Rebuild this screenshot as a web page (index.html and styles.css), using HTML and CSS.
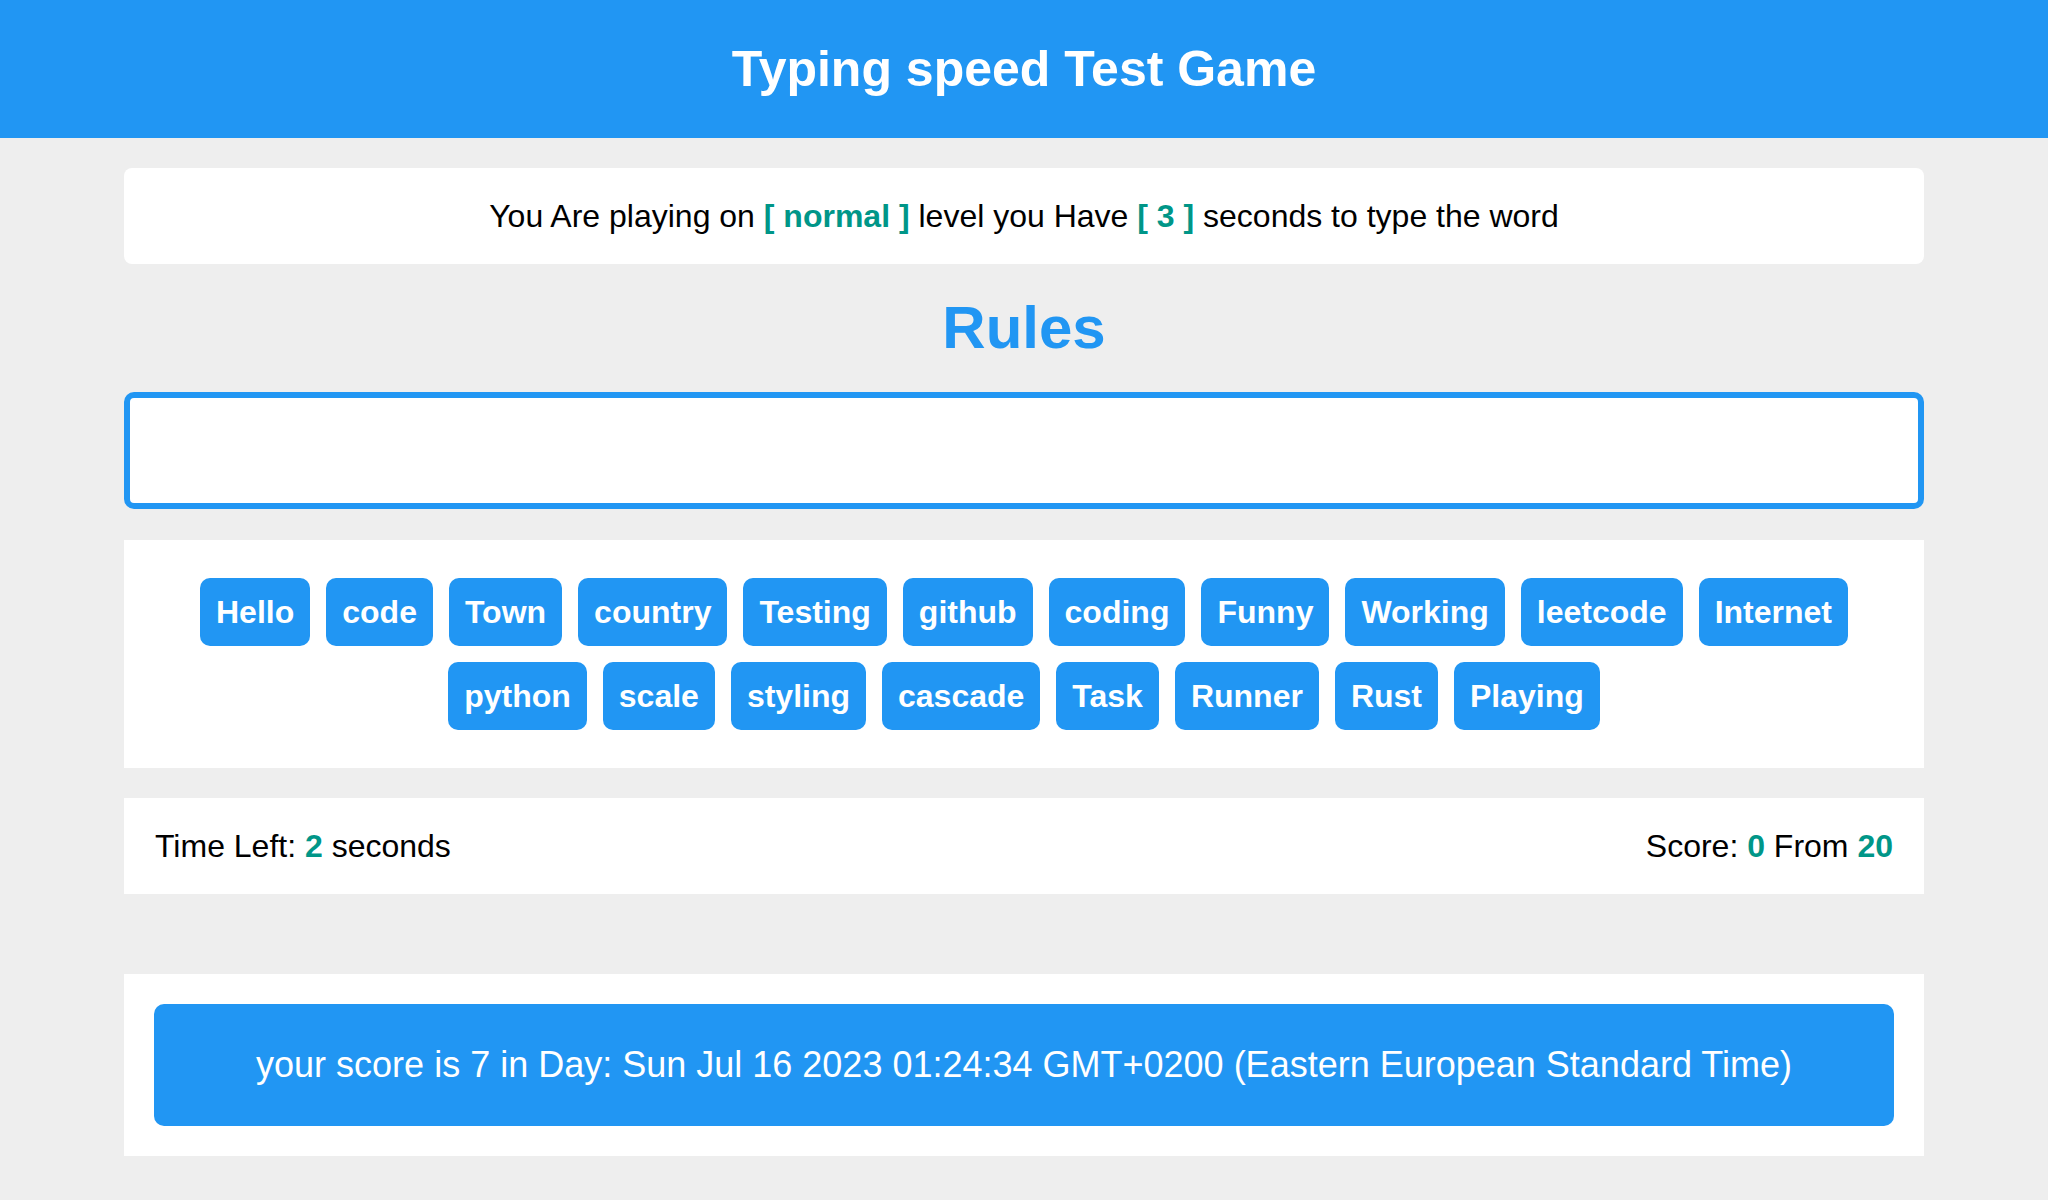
FILE: index.html
```html
<!DOCTYPE html>
<html lang="en">
<head>
<meta charset="UTF-8">
<title>Typing speed Test Game</title>
<link rel="stylesheet" href="styles.css">
</head>
<body>
<header class="top-bar">
  <h1 class="title">Typing speed Test Game</h1>
</header>
<main class="game">
  <div class="message">You Are playing on <span class="lvl">[ normal ]</span> level you Have <span class="seconds">[ 3 ]</span> seconds to type the word</div>
  <h2 class="rules">Rules</h2>
  <input class="input" type="text" aria-label="type here">
  <div class="upcoming-words">
    <div class="word">Hello</div>
    <div class="word">code</div>
    <div class="word">Town</div>
    <div class="word">country</div>
    <div class="word">Testing</div>
    <div class="word">github</div>
    <div class="word">coding</div>
    <div class="word">Funny</div>
    <div class="word">Working</div>
    <div class="word">leetcode</div>
    <div class="word">Internet</div>
    <div class="word">python</div>
    <div class="word">scale</div>
    <div class="word">styling</div>
    <div class="word">cascade</div>
    <div class="word">Task</div>
    <div class="word">Runner</div>
    <div class="word">Rust</div>
    <div class="word">Playing</div>
  </div>
  <div class="control">
    <div class="time">Time Left: <span class="num">2</span> seconds</div>
    <div class="score">Score: <span class="num">0</span> From <span class="num">20</span></div>
  </div>
  <div class="finish">
    <div class="result">your score is 7 in Day: Sun Jul 16 2023 01:24:34 GMT+0200 (Eastern European Standard Time)</div>
  </div>
</main>
</body>
</html>
```
FILE: styles.css
```css
* {
  box-sizing: border-box;
}

body {
  margin: 0;
  background: #eeeeee;
  font-family: "Liberation Sans", Arial, sans-serif;
  color: #000;
}

.top-bar {
  height: 138px;
  background: #2196f3;
  display: flex;
  align-items: center;
  justify-content: center;
}

.title {
  margin: 0;
  color: #fff;
  font-size: 50px;
  font-weight: bold;
}

.game {
  width: 1800px;
  margin: 0 auto;
  padding-top: 30px;
}

.message {
  background: #fff;
  border-radius: 8px;
  padding: 30px;
  font-size: 32px;
  line-height: 36px;
  text-align: center;
}

.lvl,
.seconds,
.num {
  color: #009688;
  font-weight: bold;
}

.rules {
  margin: 30px 0;
  font-size: 60px;
  line-height: 68px;
  color: #2196f3;
  text-align: center;
  font-weight: bold;
}

.input {
  display: block;
  width: 100%;
  height: 117px;
  border: 6px solid #2196f3;
  border-radius: 10px;
  background: #fff;
  outline: none;
  font-size: 32px;
  padding: 0 30px;
}

.upcoming-words {
  margin-top: 31px;
  background: #fff;
  padding: 30px;
  display: flex;
  flex-wrap: wrap;
  justify-content: center;
}

.word {
  margin: 8px;
  padding: 16px;
  background: #2196f3;
  color: #fff;
  font-size: 32px;
  line-height: 36px;
  font-weight: bold;
  border-radius: 10px;
}

.control {
  margin-top: 30px;
  background: #fff;
  height: 96px;
  padding: 0 31px;
  display: flex;
  align-items: center;
  justify-content: space-between;
  font-size: 32px;
}

.finish {
  margin-top: 80px;
  background: #fff;
  padding: 30px;
}

.result {
  background: #2196f3;
  color: #fff;
  border-radius: 10px;
  padding: 40px 20px;
  font-size: 36px;
  line-height: 42px;
  text-align: center;
}
```
